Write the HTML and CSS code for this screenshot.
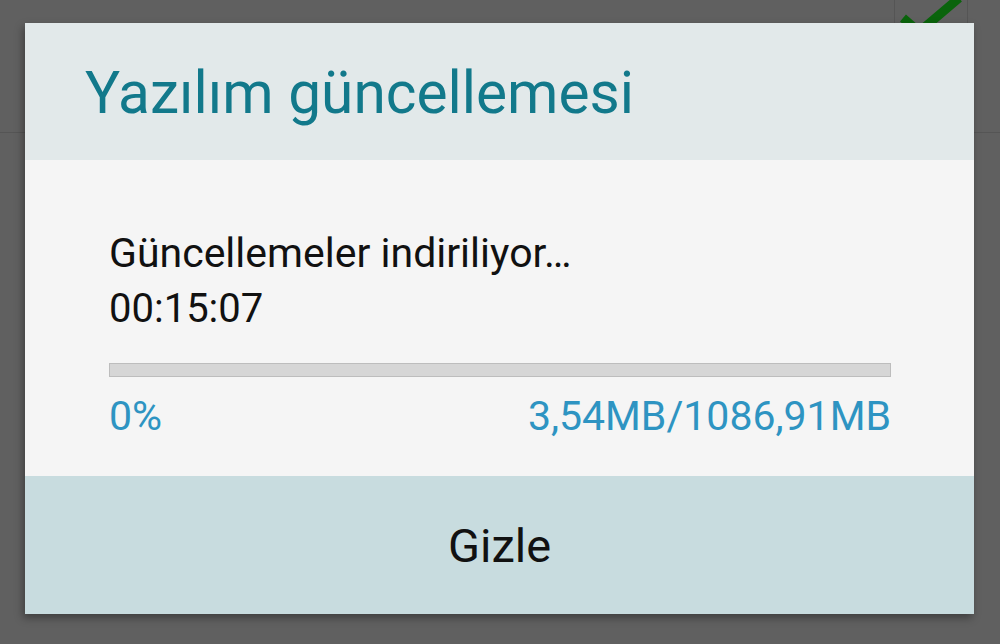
FILE: index.html
```html
<!DOCTYPE html>
<html lang="tr">
<head>
    <meta charset="UTF-8">
    <meta name="viewport" content="width=device-width, initial-scale=1.0">
    <title>Yazılım güncellemesi</title>
    <link rel="stylesheet" href="styles.css">
</head>
<body>
    <!-- settings screen underneath, dimmed by the dialog -->
    <div class="screen">
        <div class="list-row">
            <span class="row-label">000000</span>
            <div class="row-check">
                <svg width="72" height="40" viewBox="0 0 72 40">
                    <path d="M8 18 L24 32 L64 -2" fill="none" stroke="#0a640c" stroke-width="9"/>
                </svg>
            </div>
        </div>
    </div>

    <div class="dialog">
        <div class="dialog-title">
            <h1>Yazılım güncellemesi</h1>
        </div>
        <div class="dialog-body">
            <p class="status">Güncellemeler indiriliyor…</p>
            <p class="timer">00:15:07</p>
            <div class="progress">
                <div class="progress-fill" style="width: 0%;"></div>
            </div>
            <div class="progress-info">
                <span>0%</span>
                <span>3,54MB/1086,91MB</span>
            </div>
        </div>
        <button class="dialog-btn">Gizle</button>
    </div>
</body>
</html>
```

FILE: styles.css
```css
:root {
    --dim-bg: #606060;
    --title-bg: #e2e9ea;
    --body-bg: #f5f5f5;
    --button-bg: #c8dcdf;
    --title-color: #12798b;
    --info-color: #2e94c2;
    --text-color: #111;
}

* {
    margin: 0;
    padding: 0;
    box-sizing: border-box;
}

body {
    width: 1000px;
    height: 644px;
    overflow: hidden;
    font-family: Roboto, 'Noto Sans', sans-serif;
    background-color: var(--dim-bg);
    position: relative;
}

.screen {
    height: 100%;
}

.list-row {
    height: 133px;
    display: flex;
    justify-content: space-between;
    border-bottom: 1px solid #555;
}

.row-label {
    margin-top: -40px;
    padding-left: 50px;
    font-size: 40px;
    letter-spacing: 10px;
    color: #2a2a2a;
    line-height: 44px;
}

.row-check {
    width: 74px;
    margin-right: 32px;
    border-left: 1px solid #555;
    border-right: 1px solid #555;
    display: flex;
    justify-content: center;
}

.dialog {
    position: absolute;
    left: 25px;
    top: 23px;
    width: 949px;
    height: 591px;
    display: flex;
    flex-direction: column;
    box-shadow: -2px 4px 8px rgba(0,0,0,0.35);
}

.dialog-title {
    height: 137px;
    background-color: var(--title-bg);
    padding: 35px 0 0 60px;
}

.dialog-title h1 {
    font-size: 58.6px;
    font-weight: 400;
    color: var(--title-color);
    line-height: 70px;
}

.dialog-body {
    height: 316px;
    background-color: var(--body-bg);
    padding: 65px 83px 0 84px;
    font-size: 41px;
    color: var(--text-color);
}

.status,
.timer {
    line-height: 56px;
}

.timer {
    font-size: 40px;
}

.progress {
    margin-top: 26px;
    height: 14px;
    background-color: #d6d6d6;
    border: 1px solid #bdbdbd;
}

.progress-fill {
    height: 100%;
    background-color: var(--info-color);
}

.progress-info {
    display: flex;
    justify-content: space-between;
    color: var(--info-color);
    line-height: 50px;
    margin-top: 14px;
}

.dialog-btn {
    flex: 1;
    border: none;
    background-color: var(--button-bg);
    font-family: inherit;
    font-size: 47px;
    color: var(--text-color);
}
```
